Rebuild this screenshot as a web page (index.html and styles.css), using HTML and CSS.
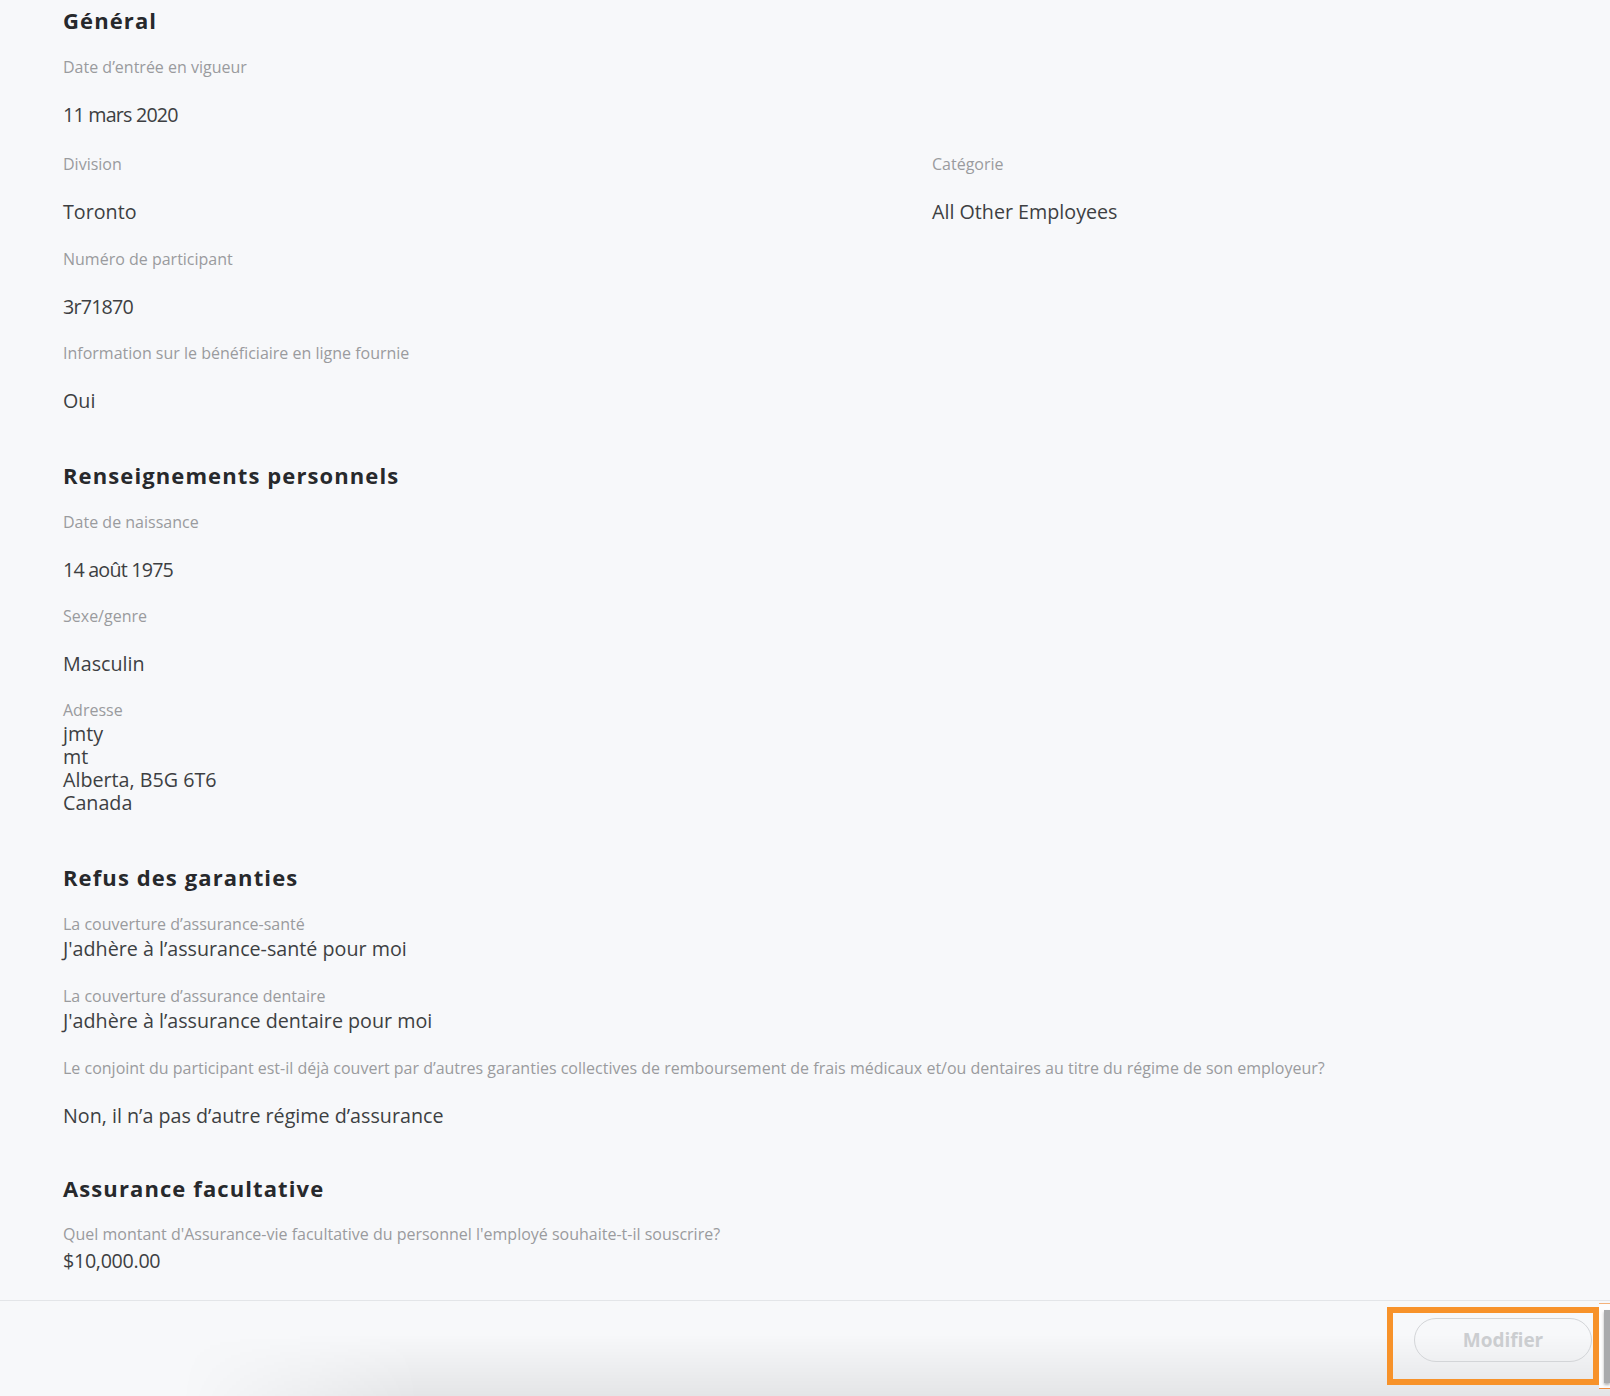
FILE: index.html
```html
<!DOCTYPE html>
<html lang="fr">
<head>
<meta charset="utf-8">
<title>Résumé du participant</title>
<link rel="stylesheet" href="styles.css">
</head>
<body>
<div class="page">
  <main class="content">
    <section class="section first">
      <h2 class="heading">Général</h2>
      <div class="field">
        <div class="label">Date d’entrée en vigueur</div>
        <div class="value num">11 mars 2020</div>
      </div>
      <div class="grid">
        <div class="col">
          <div class="field">
            <div class="label">Division</div>
            <div class="value">Toronto</div>
          </div>
          <div class="field">
            <div class="label">Numéro de participant</div>
            <div class="value num">3r71870</div>
          </div>
          <div class="field">
            <div class="label">Information sur le bénéficiaire en ligne fournie</div>
            <div class="value">Oui</div>
          </div>
        </div>
        <div class="col">
          <div class="field">
            <div class="label">Catégorie</div>
            <div class="value">All Other Employees</div>
          </div>
        </div>
      </div>
    </section>

    <section class="section">
      <h2 class="heading">Renseignements personnels</h2>
      <div class="field">
        <div class="label">Date de naissance</div>
        <div class="value num">14 août 1975</div>
      </div>
      <div class="field">
        <div class="label">Sexe/genre</div>
        <div class="value">Masculin</div>
      </div>
      <div class="field compact">
        <div class="label">Adresse</div>
        <div class="value address">
          <div class="addr-line">jmty</div>
          <div class="addr-line">mt</div>
          <div class="addr-line">Alberta, B5G 6T6</div>
          <div class="addr-line">Canada</div>
        </div>
      </div>
    </section>

    <section class="section">
      <h2 class="heading">Refus des garanties</h2>
      <div class="field compact">
        <div class="label">La couverture d’assurance-santé</div>
        <div class="value">J'adhère à l’assurance-santé pour moi</div>
      </div>
      <div class="field compact">
        <div class="label">La couverture d’assurance dentaire</div>
        <div class="value">J'adhère à l’assurance dentaire pour moi</div>
      </div>
      <div class="field">
        <div class="label">Le conjoint du participant est-il déjà couvert par d’autres garanties collectives de remboursement de frais médicaux et/ou dentaires au titre du régime de son employeur?</div>
        <div class="value">Non, il n’a pas d’autre régime d’assurance</div>
      </div>
    </section>

    <section class="section last">
      <h2 class="heading">Assurance facultative</h2>
      <div class="field compact tight">
        <div class="label">Quel montant d'Assurance-vie facultative du personnel l'employé souhaite-t-il souscrire?</div>
        <div class="value money">$10,000.00</div>
      </div>
    </section>
  </main>

  <footer class="footer">
    <button class="btn-outline" type="button">Modifier</button>
    <div class="highlight"></div>
    <div class="edge-panel"><div class="edge-bar"></div></div>
  </footer>
</div>
</body>
</html>
```

FILE: styles.css
```css
html, body {
  margin: 0;
  padding: 0;
}
body {
  background: #f7f8fa;
  font-family: "Open Sans", "Noto Sans", sans-serif;
  color: #3d3f42;
  overflow: hidden;
  height: 1396px;
}
.page {
  position: relative;
  height: 1396px;
  overflow: hidden;
}
.content {
  padding: 0 63px;
  height: 1300px;
  box-sizing: border-box;
}
.section {
  margin-top: 30px;
}
.section.first {
  margin-top: 0;
}
.heading {
  margin: 0 0 3px;
  font-size: 22px;
  line-height: 41px;
  font-weight: 700;
  letter-spacing: 1.1px;
  color: #27292c;
}
.label {
  font-size: 16px;
  line-height: 47px;
  color: #9a9b9e;
}
.value {
  font-size: 19.7px;
  line-height: 47.4px;
  color: #3d3f42;
}
.value.num {
  letter-spacing: -0.8px;
}
.value.money {
  letter-spacing: -0.3px;
}
.grid {
  display: grid;
  grid-template-columns: 869px 1fr;
  margin-top: 3px;
}
.field.compact {
  padding-top: 10px;
  padding-bottom: 13px;
}
.field.compact .label {
  line-height: 26px;
}
.field.compact .value {
  line-height: 23px;
}
.value.address {
  display: flex;
  flex-direction: column;
}
.addr-line {
  height: 22.7px;
  line-height: 22.7px;
}
.section.last {
  margin-top: 28px;
}
.field.tight {
  padding-top: 10px;
}
.field.tight .label {
  line-height: 24px;
}
.field.tight .value {
  line-height: 30px;
}

.footer {
  position: relative;
  height: 96px;
  border-top: 1px solid #e3e5e8;
  display: flex;
  justify-content: flex-end;
  align-items: flex-start;
  padding: 17px 18px 0 0;
  box-sizing: border-box;
  overflow: hidden;
}
.footer::before {
  content: "";
  position: absolute;
  left: 0;
  right: 0;
  bottom: 0;
  height: 62px;
  background: linear-gradient(to bottom, rgba(0, 0, 0, 0), rgba(0, 0, 0, 0.075));
  -webkit-mask-image: linear-gradient(to right, transparent 180px, #000 420px);
  mask-image: linear-gradient(to right, transparent 180px, #000 420px);
  pointer-events: none;
}
.btn-outline {
  position: relative;
  width: 178px;
  height: 44px;
  border: 1.5px solid #d3d5d8;
  border-radius: 22px;
  background: transparent;
  font-family: "Open Sans", sans-serif;
  font-weight: 700;
  font-size: 19px;
  color: #cbcdd0;
}

.highlight {
  position: absolute;
  left: 1387px;
  top: 6px;
  width: 200px;
  height: 66px;
  border: 6px solid #f7922a;
}
.edge-panel {
  position: absolute;
  left: 1599px;
  top: 2px;
  width: 11px;
  height: 86px;
  background: #fdfdfd;
  border-top: 1px solid #f4b27a;
  border-bottom: 1px solid #f08a3c;
  box-sizing: border-box;
}
.edge-bar {
  margin: 6px 0 0 5px;
  height: 73px;
  background: #a9aaac;
  box-shadow: 0 2px 3px rgba(0, 0, 0, 0.3);
}
```
